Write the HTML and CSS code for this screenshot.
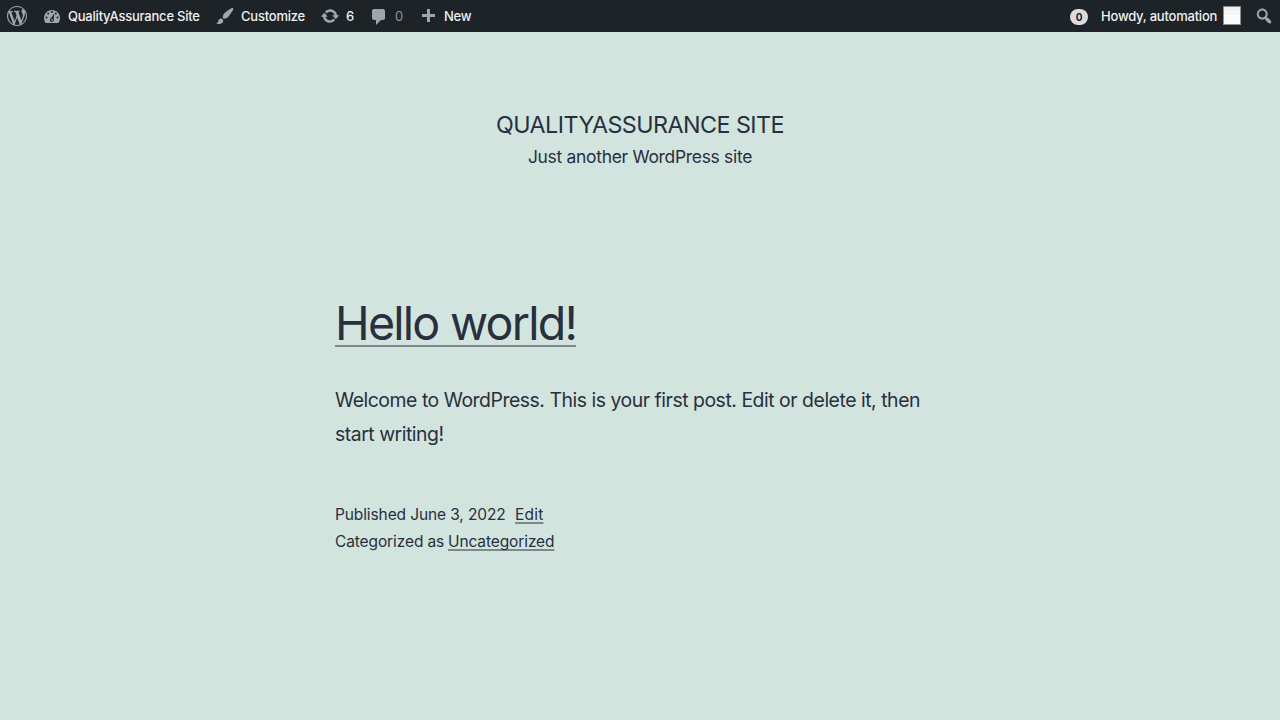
FILE: index.html
```html
<!DOCTYPE html>
<html lang="en">
<head>
<meta charset="utf-8">
<title>QualityAssurance Site</title>
<link rel="stylesheet" href="styles.css">
</head>
<body>
<header class="adminbar">
  <a class="item logo"><svg class="icon" viewBox="0 0 20 20"><path d="M20 10c0-5.51-4.49-10-10-10C4.48 0 0 4.49 0 10c0 5.52 4.48 10 10 10 5.51 0 10-4.48 10-10zM7.78 15.37L4.37 6.22c.55-.02 1.17-.08 1.17-.08.5-.06.44-1.13-.06-1.11 0 0-1.45.11-2.37.11-.18 0-.37 0-.58-.01C4.12 2.69 6.87 1.11 10 1.11c2.33 0 4.45.87 6.05 2.34-.68-.11-1.65.39-1.65 1.58 0 .74.45 1.36.9 2.1.35.61.55 1.36.55 2.46 0 1.49-1.4 5-1.4 5l-3.03-8.37c.54-.02.82-.17.82-.17.5-.05.44-1.25-.06-1.22 0 0-1.44.12-2.38.12-.87 0-2.33-.12-2.33-.12-.5-.03-.56 1.2-.06 1.22l.92.08 1.26 3.41zM17.41 10c.24-.64.74-1.87.43-4.25.7 1.29 1.05 2.71 1.05 4.25 0 3.29-1.73 6.24-4.4 7.78.97-2.59 1.94-5.2 2.92-7.78zM6.1 18.09C3.12 16.65 1.11 13.53 1.11 10c0-1.3.23-2.48.72-3.59C3.25 10.3 4.67 14.2 6.1 18.09zm4.03-6.63l2.58 6.98c-.86.29-1.76.45-2.71.45-.79 0-1.57-.11-2.29-.33.81-2.38 1.62-4.74 2.42-7.1z"/></svg></a>
  <a class="item site"><svg class="icon" viewBox="0 0 20 20"><path fill-rule="evenodd" d="M3.76 17h12.48c1.1-1.37 1.76-3.11 1.76-5 0-4.42-3.58-8-8-8s-8 3.58-8 8c0 1.89.66 3.63 1.76 5zM10 5a1 1 0 0 1 0 2a1 1 0 0 1 0-2zM6.2 6.5a1 1 0 0 1 0 2a1 1 0 0 1 0-2zM13.8 6.5a1 1 0 0 1 0 2a1 1 0 0 1 0-2zM4.5 10.5a1 1 0 0 1 0 2a1 1 0 0 1 0-2zM15.5 10.5a1 1 0 0 1 0 2a1 1 0 0 1 0-2zM12.3 7.5L11.7 13.2a2 2 0 1 1-2.5-1.1zM10 13a.9.9 0 1 0 0 1.8a.9.9 0 0 0 0-1.8z"/></svg><span>QualityAssurance Site</span></a>
  <a class="item customize"><svg class="icon" viewBox="0 0 20 20"><path d="M18.33 3.57s.27-.8-.31-1.36c-.53-.52-1.22-.24-1.22-.24-.61.3-5.76 3.47-7.67 5.57-.86.96-2.06 3.79-1.09 4.82.92.98 3.96-.17 4.79-1 2.06-2.06 5.21-7.17 5.5-7.79zM1.4 17.65c2.37-1.56 1.46-3.41 3.23-4.64.93-.65 2.22-.62 3.08.29.63.67.8 2.57-.16 3.46-1.57 1.45-4 1.55-6.15.89z"/></svg><span>Customize</span></a>
  <a class="item updates"><svg class="icon" viewBox="0 0 20 20"><path d="M10.2 3.28c3.53 0 6.43 2.61 6.92 6h2.08l-3.5 4-3.5-4h2.32c-.45-1.97-2.21-3.45-4.32-3.45-1.45 0-2.73.71-3.54 1.78L4.95 5.66C6.23 4.2 8.11 3.28 10.2 3.28zm-.4 13.44c-3.52 0-6.43-2.61-6.92-6H.8l3.5-4c1.17 1.33 2.33 2.67 3.5 4H5.48c.45 1.97 2.21 3.45 4.32 3.45 1.45 0 2.73-.71 3.54-1.78l1.71 1.95c-1.28 1.46-3.15 2.38-5.25 2.38z"/></svg><span>6</span></a>
  <a class="item comments"><svg class="icon" viewBox="0 0 20 20"><path d="M5 2h9c1.1 0 2 .9 2 2v7c0 1.1-.9 2-2 2h-2l-5 5v-5H5c-1.1 0-2-.9-2-2V4c0-1.1.9-2 2-2z"/></svg><span>0</span></a>
  <a class="item new"><svg class="icon" viewBox="0 0 20 20"><path d="M17 7v3h-5v5H9v-5H4V7h5V2h3v5h5z"/></svg><span>New</span></a>
  <div class="right">
    <span class="count">0</span>
    <a class="account"><span>Howdy, automation</span><i class="avatar"></i></a>
    <svg class="icon search" viewBox="0 0 20 20"><path d="M12.14 4.18c1.87 1.87 2.11 4.75.72 6.89.12.1.22.21.36.31.2.16.47.36.81.59.34.24.56.39.66.47.42.31.73.57.94.78.32.32.6.65.84 1 .25.35.44.69.59 1.04.14.35.21.68.18 1-.02.32-.14.59-.36.81s-.49.34-.81.36c-.31.02-.65-.04-.99-.19-.35-.14-.7-.34-1.04-.59-.35-.24-.68-.52-1-.84-.21-.21-.47-.52-.77-.93-.1-.13-.25-.35-.47-.66-.22-.32-.4-.57-.56-.78-.16-.2-.29-.35-.44-.5-2.07 1.09-4.69.76-6.44-.98-2.14-2.15-2.14-5.64 0-7.78 2.15-2.15 5.63-2.15 7.78 0zm-1.41 6.36c1.36-1.37 1.36-3.58 0-4.95-1.37-1.37-3.59-1.37-4.95 0-1.37 1.37-1.37 3.58 0 4.95 1.36 1.37 3.58 1.37 4.95 0z"/></svg>
  </div>
</header>
<div class="branding">
  <h1 class="site-title">QualityAssurance Site</h1>
  <p class="tagline">Just another WordPress site</p>
</div>
<main class="post">
  <h2 class="post-title"><a>Hello world!</a></h2>
  <p class="content">Welcome to WordPress. This is your first post. Edit or delete it, then<br><span class="line-two">start writing!</span></p>
  <footer class="meta">
    <div class="row"><span class="date">Published June 3, 2022</span><a class="link edit">Edit</a></div>
    <div class="row"><span class="cat">Categorized as</span><a class="link uncat">Uncategorized</a></div>
  </footer>
</main>
</body>
</html>
```
FILE: styles.css
```css
* { box-sizing: border-box; }
body {
  margin: 0;
  height: 720px;
  overflow: hidden;
  background: #d1e4dd;
  color: #28303d;
  font-family: Inter, "Liberation Sans", sans-serif;
}
h1, h2, p { margin: 0; font-weight: 400; }
.adminbar {
  display: flex;
  height: 32px;
  background: #1d2327;
  color: #f0f0f1;
  font-size: 13px;
  line-height: 32px;
  font-weight: 500;
  letter-spacing: -0.22px;
  white-space: nowrap;
}
.item { display: flex; flex: none; align-items: center; gap: 6px; }
.icon { display: block; flex: none; width: 20px; height: 20px; fill: #a1a6aa; }
.logo { width: 35px; padding-left: 7px; }
.site { width: 173px; padding-left: 7px; }
.customize { width: 105px; padding-left: 7px; }
.updates { width: 49px; padding-left: 7px; }
.comments { width: 49px; padding-left: 7px; }
.comments span { color: #8f9499; font-weight: 400; }
.comments .icon, .new .icon { margin-top: 2px; }
.new { padding-left: 7px; }
.right { display: flex; align-items: center; margin-left: auto; padding-right: 6px; }
.count {
  width: 18px;
  height: 16px;
  margin: 2px 13px 0 0;
  border-radius: 8px;
  background: #dcdcde;
  color: #1d2327;
  font-size: 10px;
  font-weight: 700;
  letter-spacing: 0;
  line-height: 16px;
  text-align: center;
}
.account { display: flex; align-items: center; width: 140px; justify-content: space-between; }
.avatar { width: 18px; height: 19px; margin-bottom: 1px; border: 1px solid #8c8f94; background: linear-gradient(#f0f0f0 0 25%, #f8f8f8 25% 35%, #ededed 35% 42%, #fafafa 42%); }
.search { margin-left: 13px; }
.branding { padding-top: 75px; text-align: center; }
.site-title { font-size: 23.3px; line-height: 36px; letter-spacing: -0.55px; text-transform: uppercase; }
.tagline { font-size: 17.45px; line-height: 28px; letter-spacing: -0.29px; }
.post { width: 610px; margin: 121px 0 0 335px; white-space: nowrap; }
.post-title { font-size: 46.6px; line-height: 62px; letter-spacing: -1.75px; }
.post-title a {
  text-decoration: underline;
  text-decoration-color: #7d898d;
  text-decoration-thickness: 2px;
  text-underline-offset: 5px;
  text-decoration-skip-ink: none;
}
.content { margin-top: 29px; font-size: 19.4px; line-height: 34px; letter-spacing: -0.46px; }
.meta { margin-top: 50px; font-size: 15.5px; line-height: 27px; letter-spacing: -0.11px; }
.row { display: flex; }
.link {
  text-decoration: underline;
  text-decoration-color: #7d898d;
  text-decoration-thickness: 2px;
  text-underline-offset: 2px;
  text-decoration-skip-ink: none;
}
.edit { letter-spacing: 0.2px; }
.date { width: 180px; }
.cat { width: 113px; }
```
